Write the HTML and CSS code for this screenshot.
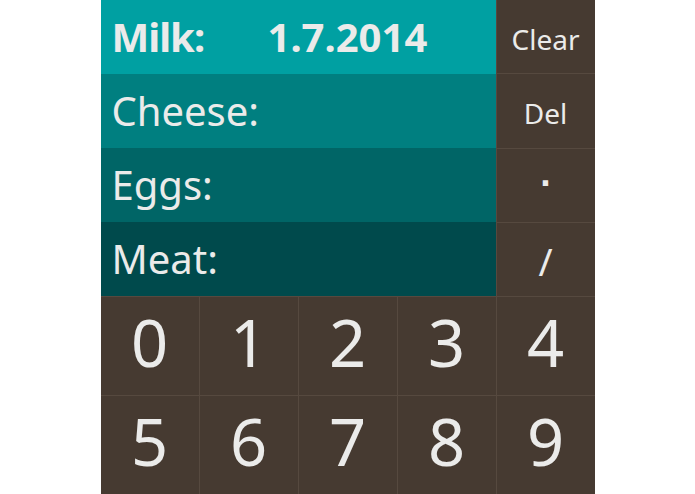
FILE: index.html
```html
<!DOCTYPE html>
<html lang="en">
<head>
<meta charset="utf-8">
<title>Expiry dates</title>
<link rel="stylesheet" href="styles.css">
</head>
<body>
<main class="app">
  <section class="top">
    <div class="foods">
      <div class="food food-milk active"><span class="label">Milk:</span><span class="date">1.7.2014</span></div>
      <div class="food food-cheese"><span class="label">Cheese:</span></div>
      <div class="food food-eggs"><span class="label">Eggs:</span></div>
      <div class="food food-meat"><span class="label">Meat:</span></div>
    </div>
    <div class="actions">
      <button class="key key-small">Clear</button>
      <button class="key key-small">Del</button>
      <button class="key key-symbol key-dot">.</button>
      <button class="key key-symbol key-slash">/</button>
    </div>
  </section>
  <section class="pad">
    <button class="key key-digit">0</button>
    <button class="key key-digit">1</button>
    <button class="key key-digit">2</button>
    <button class="key key-digit">3</button>
    <button class="key key-digit">4</button>
    <button class="key key-digit">5</button>
    <button class="key key-digit">6</button>
    <button class="key key-digit">7</button>
    <button class="key key-digit">8</button>
    <button class="key key-digit">9</button>
  </section>
</main>
</body>
</html>
```

FILE: styles.css
```css
html, body {
  margin: 0;
  padding: 0;
  background: #ffffff;
}

body {
  display: flex;
  justify-content: center;
  font-family: "Noto Sans", "Open Sans", sans-serif;
  color: #ebebea;
}

.app {
  width: 494px;
  height: 494px;
  display: flex;
  flex-direction: column;
  gap: 1px;
  background: #56493f;
}

.top {
  display: flex;
  gap: 1px;
  height: 296px;
}

.foods {
  width: 395px;
  display: flex;
  flex-direction: column;
}

.food {
  flex: 1;
  display: flex;
  align-items: center;
  padding-left: 11px;
  font-size: 40px;
  line-height: 1;
}

.food-milk { background: #00a0a2; }
.food-cheese { background: #007f80; }
.food-eggs { background: #006566; }
.food-meat { background: #004a4c; }

.label {
  min-width: 156px;
}

.active {
  font-weight: 700;
}

.active .label {
  letter-spacing: -1px;
}

.actions {
  flex: 1;
  display: grid;
  grid-template-rows: repeat(4, 1fr);
  gap: 1px;
}

.key {
  border: 0;
  margin: 0;
  padding: 0;
  background: #463a31;
  color: #ebebea;
  font-family: inherit;
  display: flex;
  align-items: center;
  justify-content: center;
  line-height: 1;
}

.key-small {
  font-size: 28px;
  padding-top: 5px;
}

.key-symbol {
  font-size: 38px;
}

/* square full stop */
.key-dot {
  font-family: "DejaVu Sans", sans-serif;
  font-size: 30px;
  font-weight: 700;
  padding-bottom: 18px;
}

.key-slash {
  padding-top: 4px;
}

.pad {
  flex: 1;
  display: grid;
  grid-template-columns: repeat(5, 1fr);
  grid-template-rows: repeat(2, 1fr);
  gap: 1px;
}

.key-digit {
  font-size: 65px;
  padding-bottom: 8px;
}
```
